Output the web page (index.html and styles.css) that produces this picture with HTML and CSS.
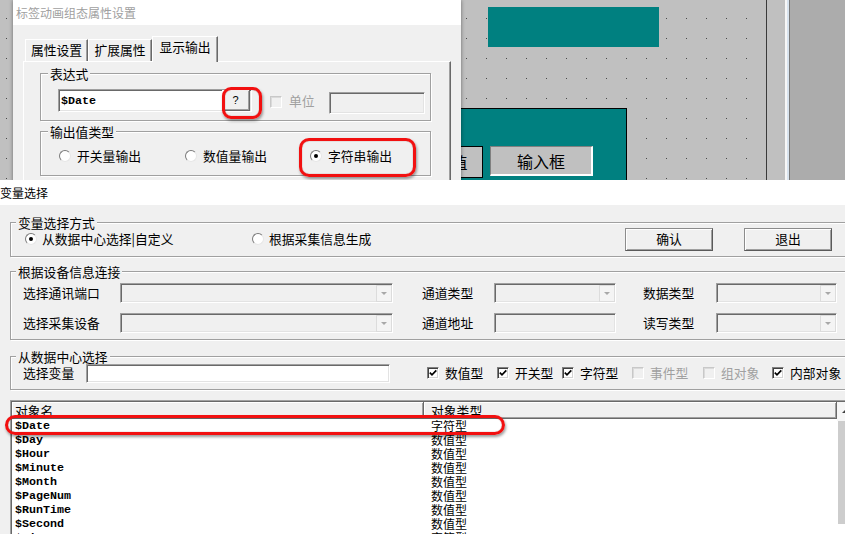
FILE: index.html
```html
<!DOCTYPE html>
<html lang="zh">
<head>
<meta charset="utf-8">
<title>变量选择</title>
<link rel="stylesheet" href="styles.css">
</head>
<body>
<div class="shot-top">
  <div class="canvas">
    <div class="shape teal-a"></div>
    <div class="shape teal-b"></div>
    <div class="shape cbtn btn-val">数值</div>
    <div class="shape cbtn btn-input">输入框</div>
    <div class="prop">
      <div class="win-title">标签动画组态属性设置</div>
      <div class="win-body">
        <div class="tabs">
          <div class="tab t1">属性设置</div>
          <div class="tab t2">扩展属性</div>
          <div class="tab sel">显示输出</div>
        </div>
        <div class="tab-panel">
          <fieldset class="grp g-expr">
            <legend>表达式</legend>
            <div class="expr-row">
              <div class="sunken expr-edit"><span class="mono expr-text">$Date</span><span class="qbtn">?</span></div>
              <span class="chk dis"></span>
              <span class="dis-text unit-label">单位</span>
              <div class="sunken unit-edit"></div>
            </div>
          </fieldset>
          <fieldset class="grp g-out">
            <legend>输出值类型</legend>
            <div class="out-row">
              <span class="opt w126"><span class="radio"></span>开关量输出</span>
              <span class="opt w125"><span class="radio"></span>数值量输出</span>
              <span class="opt"><span class="radio on"></span>字符串输出</span>
            </div>
          </fieldset>
        </div>
      </div>
      <div class="mark mark-q"></div>
      <div class="mark mark-str"></div>
    </div>
  </div>
  <div class="edge">
    <i class="e-dark"></i><i class="e-gray"></i><i class="e-white"></i><i class="e-blue"></i><i class="e-line"></i><i class="e-rest"></i>
  </div>
</div>

<div class="dlg">
  <div class="dlg-title">变量选择</div>
  <div class="dlg-body">
    <fieldset class="grp ga">
      <legend>变量选择方式</legend>
      <div class="ga-row">
        <span class="opt small w227"><span class="radio on"></span>从数据中心选择|自定义</span>
        <span class="opt small w373"><span class="radio"></span>根据采集信息生成</span>
        <span class="btn">确认</span>
        <span class="btn btn-gap">退出</span>
      </div>
    </fieldset>

    <fieldset class="grp gb">
      <legend>根据设备信息连接</legend>
      <div class="gb-grid">
        <span class="lbl">选择通讯端口</span>
        <div class="sunken combo"><span class="drop"></span></div>
        <span class="lbl l2">通道类型</span>
        <div class="sunken combo"><span class="drop"></span></div>
        <span class="lbl l3">数据类型</span>
        <div class="sunken combo"><span class="drop"></span></div>

        <span class="lbl">选择采集设备</span>
        <div class="sunken combo"><span class="drop"></span></div>
        <span class="lbl l2">通道地址</span>
        <div class="sunken combo"></div>
        <span class="lbl l3">读写类型</span>
        <div class="sunken combo"><span class="drop"></span></div>
      </div>
    </fieldset>

    <fieldset class="grp gc">
      <legend>从数据中心选择</legend>
      <div class="gc-row">
        <span class="lbl var-label">选择变量</span>
        <div class="sunken var-edit"></div>
        <div class="chks">
          <span class="ck"><span class="chk"><svg viewBox="0 0 10 10"><path d="M1.8 4.6 L4 6.8 L8.3 2.4"/></svg></span>数值型</span>
          <span class="ck"><span class="chk"><svg viewBox="0 0 10 10"><path d="M1.8 4.6 L4 6.8 L8.3 2.4"/></svg></span>开关型</span>
          <span class="ck"><span class="chk"><svg viewBox="0 0 10 10"><path d="M1.8 4.6 L4 6.8 L8.3 2.4"/></svg></span>字符型</span>
          <span class="ck dis-text"><span class="chk dis"></span>事件型</span>
          <span class="ck dis-text"><span class="chk dis"></span>组对象</span>
          <span class="ck"><span class="chk"><svg viewBox="0 0 10 10"><path d="M1.8 4.6 L4 6.8 L8.3 2.4"/></svg></span>内部对象</span>
        </div>
      </div>
    </fieldset>

    <div class="list">
      <div class="list-main">
        <div class="lv-head">
          <div class="hc c1">对象名</div>
          <div class="hc c2">对象类型</div>
        </div>
        <div class="lv-row"><span class="c1 mono">$Date</span><span class="c2">字符型</span></div>
        <div class="lv-row"><span class="c1 mono">$Day</span><span class="c2">数值型</span></div>
        <div class="lv-row"><span class="c1 mono">$Hour</span><span class="c2">数值型</span></div>
        <div class="lv-row"><span class="c1 mono">$Minute</span><span class="c2">数值型</span></div>
        <div class="lv-row"><span class="c1 mono">$Month</span><span class="c2">数值型</span></div>
        <div class="lv-row"><span class="c1 mono">$PageNum</span><span class="c2">数值型</span></div>
        <div class="lv-row"><span class="c1 mono">$RunTime</span><span class="c2">数值型</span></div>
        <div class="lv-row"><span class="c1 mono">$Second</span><span class="c2">数值型</span></div>
        <div class="lv-row"><span class="c1 mono">$Time</span><span class="c2">字符型</span></div>
      </div>
      <div class="vscroll">
        <div class="sb-up"><span class="up-arrow"></span></div>
        <div class="sb-thumb"></div>
      </div>
    </div>
  </div>
  <div class="mark mark-row"></div>
</div>
</body>
</html>
```

FILE: styles.css
```css
* { box-sizing: border-box; }
html, body { margin: 0; padding: 0; }
body {
  width: 845px;
  height: 534px;
  overflow: hidden;
  font-family: "Noto Sans CJK SC", "Liberation Sans", sans-serif;
  font-size: 13px;
  line-height: 1;
  color: #000;
  background: #f0f0f0;
}
.mono {
  font-family: "Liberation Mono", "DejaVu Sans Mono", monospace;
  font-size: 11.67px;
  font-weight: bold;
}

/* ---------- top screenshot ---------- */
.shot-top { display: flex; height: 180px; overflow: hidden; }
.canvas {
  position: relative;
  flex: 0 0 766px;
  height: 180px;
  overflow: hidden;
  background-color: #c0c0c0;
  background-image: conic-gradient(from 270deg at 1px 1px, #484848 25%, transparent 0);
  background-size: 20px 20px;
  background-position: 6px 18px;
}
.edge { flex: 1; display: flex; }
.edge i { display: block; height: 100%; }
.e-dark { width: 1px; background: #3a3a3a; }
.e-gray { width: 18px; background: #c0c0c0; }
.e-white { width: 2px; background: #f7f7f7; }
.e-blue { width: 2px; background: #d8e3ee; }
.e-line { width: 1px; background: #7a7a7a; }
.e-rest { flex: 1; background: #acacac; }

.shape { position: absolute; }
.teal-a { left: 488px; top: 7px; width: 171px; height: 40px; background: #008080; }
.teal-b { left: 300px; top: 108px; width: 327px; height: 90px; background: #008080; border: 1px solid #000; }
.cbtn {
  display: flex; align-items: center; justify-content: center;
  font-size: 16px; background: #c0c0c0;
}
.btn-val { left: 420px; top: 146px; width: 63px; height: 32px; border: 1px solid #000; }
.btn-input {
  left: 490px; top: 146px; width: 103px; height: 30px;
  border-style: solid; border-width: 1px 2px 2px 1px;
  border-color: #808080 #fff #fff #808080;
}

/* property dialog */
.prop {
  position: absolute; left: 13px; top: 0;
  width: 448px; height: 200px;
  background: #f0f0f0;
  box-shadow: 0 0 4px rgba(0, 0, 0, .45);
}
.win-title {
  height: 25px; background: #fff; color: #a0a0a0;
  font-size: 12px; line-height: 25px; padding-left: 3px;
}
.win-body { padding: 11px 0 0 10px; }
.tabs { display: flex; align-items: flex-end; height: 26px; margin-left: 2px; }
.tab {
  position: relative;
  height: 22px; margin-bottom: 1px; padding-bottom: 1px;
  display: flex; align-items: center; justify-content: center;
  border-top: 1px solid #fff; border-left: 1px solid #fff; border-right: 1px solid #696969;
  box-shadow: inset -1px 0 #a0a0a0;
  font-size: 12.8px;
}
.t1 { width: 63px; }
.t2 { width: 64px; }
.tab.sel { width: 66px; height: 26px; margin-bottom: 0; padding-bottom: 4px; background: #f0f0f0; z-index: 1; }
.tab-panel {
  margin-top: -1px; width: 428px; height: 140px;
  border-top: 1px solid #fff; border-left: 1px solid #fff; border-right: 1px solid #696969;
  box-shadow: inset -1px 0 #a0a0a0;
  padding-left: 16px;
}

/* group boxes */
.grp {
  margin: 0; padding: 0; min-width: 0;
  border: 1px solid #a0a0a0;
  box-shadow: inset 1px 1px #fff, 1px 1px #fff;
}
.grp legend {
  margin-left: 7px; padding: 0 2px;
  height: 13px; line-height: 13px; font-size: 12.8px;
  background: #f0f0f0;
}
.g-expr { width: 391px; margin-top: 5px; padding: 9px 0 6px 0; }
.g-out { width: 391px; margin-top: 4px; padding: 10px 0 11px 0; }

.sunken {
  border: 1px solid;
  border-color: #a0a0a0 #fff #fff #a0a0a0;
  box-shadow: inset 1px 1px #696969, inset -1px -1px #e3e3e3;
}
.expr-row { display: flex; align-items: flex-start; height: 25px; margin-left: 17px; }
.expr-edit {
  width: 194px; height: 23px; background: #fff;
  display: flex; align-items: center; justify-content: space-between;
  padding: 1px 1px 1px 2px;
}
.expr-text { line-height: 14px; }
.qbtn {
  width: 28px; height: 21px; background: #f0f0f0;
  display: flex; align-items: center; justify-content: center;
  font-family: "Liberation Sans", sans-serif; font-size: 11px;
  border-right: 1px solid #696969; border-bottom: 1px solid #696969;
  box-shadow: inset 1px 1px #fff, inset -1px -1px #a0a0a0;
}
.chk {
  flex: none;
  width: 12px; height: 12px; background: #fff;
  border: 1px solid; border-color: #808080 #fff #fff #808080;
  box-shadow: inset 1px 1px #404040, inset -1px -1px #d4d4d4;
  display: flex; align-items: center; justify-content: center;
}
.chk svg { width: 10px; height: 10px; display: block; }
.chk path { fill: none; stroke: #000; stroke-width: 1.7; }
.chk.dis {
  background: #f0f0f0;
  border-color: #c8c8c8 #fff #fff #c8c8c8;
  box-shadow: inset 1px 1px #dadada;
}
.expr-row .chk { margin: 7px 0 0 18px; }
.dis-text { color: #a0a0a0; }
.unit-label { margin: 6px 0 0 7px; font-size: 12.8px; }
.unit-edit { width: 96px; height: 22px; margin: 3px 0 0 14px; background: #f0f0f0; }

.out-row { display: flex; align-items: center; height: 16px; margin-left: 18px; }
.opt { display: flex; align-items: center; gap: 6px; flex: none; font-size: 12.8px; }
.opt.small { gap: 5px; }
.w126 { width: 126px; }
.w125 { width: 125px; }
.w227 { width: 227px; }
.w373 { width: 373px; }
.radio {
  position: relative; flex: none;
  width: 12px; height: 12px; border-radius: 50%;
  background: #fff;
  border: 1px solid; border-color: #7a7a7a #e6e6e6 #e6e6e6 #7a7a7a;
}
.radio.on::after {
  content: ""; position: absolute; left: 3px; top: 3px;
  width: 4px; height: 4px; border-radius: 50%; background: #000;
}

/* red annotation marks */
.mark {
  position: absolute;
  border: 3px solid #f21010;
  box-shadow: 1px 2px 3px rgba(0, 0, 0, .4), inset 0 0 1px rgba(110, 0, 0, .7);
}
.mark-q { left: 209px; top: 87px; width: 40px; height: 32px; border-radius: 9px; }
.mark-str { left: 286px; top: 138px; width: 117px; height: 39px; border-radius: 10px; }
.mark-row { left: 5px; top: 235px; width: 500px; height: 20px; border-radius: 10px; }

/* ---------- variable dialog ---------- */
.dlg { position: relative; height: 354px; overflow: hidden; }
.dlg-title { height: 25px; background: #fff; font-size: 12px; line-height: 25px; }
.dlg-body { height: 329px; overflow: hidden; padding: 11px 0 0 10px; }
.dlg-body .grp { width: 850px; }
.dlg-body .grp legend { margin-left: 5px; }

.ga { padding: 0 0 5px 0; }
.ga-row { display: flex; align-items: center; height: 23px; margin: -1px 0 0 14px; }
.btn {
  flex: none; width: 88px; height: 23px;
  display: flex; align-items: center; justify-content: center;
  background: #f0f0f0; font-size: 12.8px;
  border: 1px solid; border-color: #8c8c8c #5a5a5a #5a5a5a #8c8c8c;
  box-shadow: inset 1px 1px #fff, inset -1px -1px #a0a0a0;
}
.btn-gap { margin-left: 31px; }

.gb { margin-top: 8px; padding: 5px 0 6px 0; }
.gb-grid {
  display: grid;
  margin-left: 12px;
  grid-template-columns: 97px 273px 101px 122px 100px 121px;
  grid-auto-rows: 20px;
  row-gap: 10px;
  align-items: center;
}
.lbl { font-size: 12.8px; white-space: nowrap; }
.l2 { padding-left: 29px; }
.l3 { padding-left: 27px; }
.combo { position: relative; height: 20px; background: #f0f0f0; }
.drop {
  position: absolute; right: 0; top: 1px;
  width: 16px; height: 17px;
  background: #f4f4f4;
  border: 1px solid #dcdcdc;
  display: flex; align-items: center; justify-content: center;
}
.drop::after {
  content: ""; width: 0; height: 0;
  border-left: 3px solid transparent; border-right: 3px solid transparent;
  border-top: 3px solid #a8a8a8;
}

.gc { margin-top: 10px; padding: 1px 0 6px 0; }
.gc-row { display: flex; align-items: center; height: 19px; margin-left: 12px; }
.var-label { width: 63px; flex: none; }
.var-edit { flex: none; width: 304px; height: 19px; background: #fff; }
.chks {
  display: grid; margin-left: 37px;
  grid-template-columns: 70px 65px 70px 71px 69px 80px;
  align-items: center;
}
.ck { display: flex; align-items: center; gap: 6px; font-size: 12.8px; white-space: nowrap; }

.list {
  margin-top: 10px; width: 850px; height: 200px;
  display: flex; align-items: flex-start;
  padding: 1px 0 0 1px;
  border-top: 1px solid #a0a0a0; border-left: 1px solid #a0a0a0;
  box-shadow: inset 1px 1px #696969;
  background: #fff;
}
.list-main { flex: none; width: 825px; }
.lv-head { display: flex; height: 17px; }
.hc {
  height: 17px; background: #f0f0f0;
  border-right: 1px solid #696969; border-bottom: 1px solid #696969;
  box-shadow: inset 1px 1px #fff, inset -1px -1px #a0a0a0;
  font-size: 12.8px; line-height: 17px;
}
.hc.c1 { width: 412px; padding-left: 3px; }
.hc.c2 { width: 413px; padding-left: 7px; }
.lv-row { display: flex; height: 14px; line-height: 14px; }
.lv-row .c1 { width: 412px; padding-left: 3px; }
.lv-row .c2 { width: 413px; padding-left: 7px; font-size: 12px; }

.vscroll { flex: none; width: 17px; }
.sb-up { height: 19px; background: #f6f6f6; padding: 7px 0 0 5px; }
.up-arrow {
  display: block; width: 0; height: 0;
  border-left: 4px solid transparent; border-right: 4px solid transparent;
  border-bottom: 4px solid #404040;
}
.sb-thumb { height: 103px; margin-left: 1px; background: #cdcdcd; }
```
